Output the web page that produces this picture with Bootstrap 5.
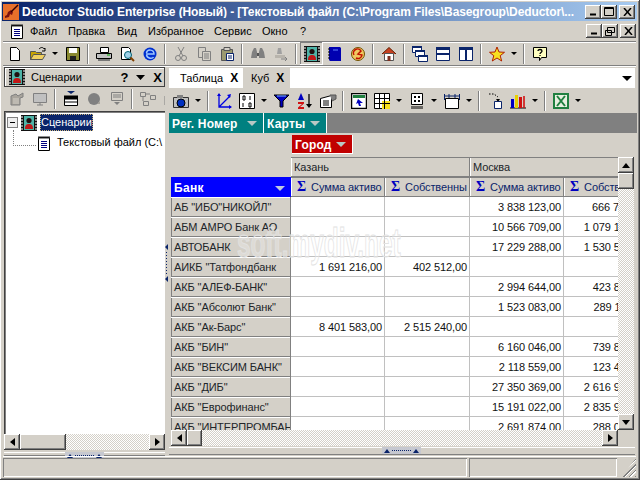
<!DOCTYPE html>
<html lang="ru">
<head>
  <meta charset="UTF-8" />
  <title>Deductor Studio Enterprise</title>
  <link href="https://cdn.jsdelivr.net/npm/bootstrap@5.3.2/dist/css/bootstrap.min.css" rel="stylesheet">
  <style>
    html, body { margin: 0; height: 100%; overflow: hidden; }
    body { background: #d4d0c8; color: #000; font: 11px/1 "Liberation Sans", Arial, sans-serif; }
    svg { display: block; flex: none; }
    .win { width: 640px; height: 480px; padding: 2px 4px 3px 3px; box-shadow: inset -1px -1px #404040, inset 1px 1px #fff, inset -2px -2px #808080; }
    .titlebar { height: 19px; flex: none; margin: 0 -1px; padding: 0 2px 0 1px; color: #fff; font-weight: 700; font-size: 12px; letter-spacing: -.1px; background: linear-gradient(90deg, #0a246a, #a6caf0); white-space: nowrap; }
    .titlebar .cap { width: 562px; padding-left: 3px; overflow: hidden; }
    .cbtn { width: 16px; height: 14px; background: #d4d0c8; box-shadow: inset -1px -1px #404040, inset 1px 1px #fff, inset -2px -2px #808080; display: flex; align-items: center; justify-content: center; }
    .cbtn.gap { margin-left: 2px; }
    .menubar { height: 21px; flex: none; border-bottom: 1px solid #808080; box-shadow: 0 1px #fff; padding-left: 6px; }
    .menubar .nav-link { padding: 0; color: #000; font-size: 11px; }
    .menubar .nav { margin-left: 5px; }
    .menubar .mi1 { width: 38px; } .menubar .mi2 { width: 49px; } .menubar .mi3 { width: 31px; }
    .menubar .mi4 { width: 66px; } .menubar .mi5 { width: 48px; } .menubar .mi6 { width: 38px; }
    .tb { height: 25px; flex: none; white-space: nowrap; overflow: hidden; }
    .tb .btn { width: 23px; height: 23px; padding: 3px; border: 0; border-radius: 0; flex: none; display: flex; align-items: center; justify-content: center; }
    .tb .btn.on { box-shadow: inset -1px -1px #fff, inset 1px 1px #808080; }
    .tb .arr { width: 12px; height: 23px; flex: none; display: flex; align-items: center; justify-content: center; }
    .tb .arr::after { content: ""; border: 3px solid transparent; border-top: 3px solid #000; border-bottom: 0; }
    .tb .sep { width: 8px; height: 20px; flex: none; }
    .tb .sep::after { content: ""; display: block; width: 2px; height: 20px; margin-left: 3px; background: #fff; box-shadow: inset 1px 0 #808080; }
    .main-tb { border-bottom: 1px solid #808080; height: 24px; box-shadow: 0 1px #fff; margin-bottom: 2px; }
    .work { height: 387px; flex: none; }
    .left { width: 162px; padding-left: 1px; margin-top: -1px; }
    .split { width: 4px; position: relative; }
    .grip-v { position: absolute; left: 0; top: 176px; }
    .pane-cap { height: 20px; flex: none; padding: 0 3px 0 5px; font-size: 11px; box-shadow: inset 1px 1px #404040, inset -1px -1px #404040, inset 2px 2px #fff; }
    .pane-cap > span { margin-left: 2px; }
    .pane-cap b { font-size: 13px; }
    .left .tb { height: 24px; padding-left: 1px; }
    .tree { height: 323px; flex: none; background: #fff; box-shadow: inset 1px 1px #404040, inset 2px 2px #808080; padding: 3px 0 0 3px; overflow: hidden; white-space: nowrap; font-size: 11px; }
    .tree .row1, .tree .row2 { height: 17px; }
    .tree .plus { width: 11px; height: 11px; border: 1px solid #808080; display: flex; align-items: center; justify-content: center; margin-right: 3px; background: #eee; flex: none; }
    .tree .plus::after { content: ""; width: 5px; height: 1px; background: #000; }
    .tree .sel { background: #0a246a; color: #fff; outline: 1px dotted #c9b27a; outline-offset: -1px; padding: 3px 1px; margin-left: 3px; }
    .tree .row2 { margin-top: 3px; }
    .tree .elbow { width: 23px; height: 16px; margin: -10px 0 0 6px; border-left: 1px dotted #808080; border-bottom: 1px dotted #808080; flex: none; }
    .tree .doc { margin: 0 5px 0 0; }
    .hs { height: 16px; flex: none; background: conic-gradient(#fff 25%, #d4d0c8 0 50%, #fff 0 75%, #d4d0c8 0) 0 0 / 2px 2px; }
    .bev { background: #d4d0c8; box-shadow: inset -1px -1px #404040, inset 1px 1px #fff, inset -2px -2px #808080; flex: none; display: flex; align-items: center; justify-content: center; }
    .sb16 { width: 16px; height: 16px; }
    .hs .thumb-l { width: 46px; height: 16px; }
    .hs .thumb-r { width: 15px; height: 16px; }
    .foot-grip { flex: none; position: relative; border-top: 1px solid #fff; border-bottom: 1px solid #808080; }
    .left .foot-grip { height: 4px; margin-top: 2px; }
    .right .foot-grip { height: 8px; margin-top: 1px; }
    .grip-h { position: absolute; height: 7px; top: -1px; background: #c6c8d0; display: flex; align-items: center; justify-content: space-between; padding: 0 2px; }
    .grip-h i { width: 0; height: 0; border: 3px solid transparent; border-bottom: 4px solid #0a246a; border-top: 0; }
    .grip-h span { flex: 1; border-top: 1px dotted #0a246a; margin: 0 2px; }
    .right { width: 466px; }
    .tabs { height: 20px; flex: none; background: #fff; padding-left: 0; border: 0; }
    .tabs .nav-link { height: 20px; padding: 0 4px 0 11px; border: 0; border-radius: 0; color: #000; font-size: 11px; display: flex; align-items: center; gap: 7px; margin: 0; }
    .tabs .nav-link.active { width: 74px; background: #fff; }
    .tabs .nav-link.idle { width: 47px; background: #d4d0c8; padding-left: 8px; }
    .tabs .x { font-weight: 700; font-size: 12px; }
    .tabs .down { margin: 0 3px 0 auto; width: 0; height: 0; border: 5px solid transparent; border-top: 5px solid #000; border-bottom: 0; }
    .right .tb { height: 25px; }
    .fieldbar { height: 20px; flex: none; background: #808080; margin-right: -2px; margin-bottom: 1px; }
    .fbtn { height: 20px; color: #fff; font-weight: 700; font-size: 12px; letter-spacing: .2px; display: flex; align-items: center; justify-content: space-between; padding: 1px 6px 0 3px; border-right: 1px solid #fff; }
    .fbtn::after { content: ""; border: 5px solid transparent; border-top: 5px solid #b8c8c4; border-bottom: 0; }
    .teal { background: #008080; }
    .red { background: #c00000; width: 61px; height: 19px; border-right: 1px solid #fff; border-bottom: 1px solid #fff; }
    .cityrow { height: 23px; flex: none; padding: 1px 0 0 123px; }
    .gridwrap { height: 273px; flex: none; padding-left: 2px; position: relative; }
    .pivot { width: 447px; height: 273px; overflow: hidden; }
    .pivot table { table-layout: fixed; width: 478px; margin: 0; border-collapse: separate; border-spacing: 0; --bs-table-bg: transparent; font-size: 11px; letter-spacing: -.1px; }
    .pivot td, .pivot th { height: 20px; padding: 1px 3px 0; border: 0; border-right: 1px solid #c0c0c0; border-bottom: 1px solid #c0c0c0; white-space: nowrap; overflow: hidden; font-weight: 400; vertical-align: middle; box-shadow: none; }
    .pivot td { text-align: right; padding-right: 2px; background: #fff; color: #111; }
    .pivot th.rh { background: #d4d0c8; border-right: 1px solid #808080; border-bottom: 1px solid #808080; box-shadow: inset 0 1px #fff, inset 1px 0 #808080; text-align: left; }
    .pivot th.none { background: #d4d0c8; border: 0; }
    .pivot th.dim { background: #d4d0c8; border-right: 1px solid #808080; border-bottom: 1px solid #808080; box-shadow: inset 0 1px #808080, inset 1px 0 #fff; text-align: left; }
    .pivot th.dim .ms { display: flex; align-items: center; gap: 5px; padding-left: 3px; color: #0a246a; }
    .pivot th.dim .ms b { color: #0000c0; font-size: 14px; font-family: "Liberation Serif", serif; }
    .pivot th.bank { background: #0000ff; color: #fff; font-weight: 700; font-size: 12px; letter-spacing: .3px; position: relative; border: 0; }
    .pivot th.bank::after { content: ""; position: absolute; right: 6px; top: 9px; border: 5px solid transparent; border-top: 5px solid #c0c8e0; border-bottom: 0; }
    .vs { width: 16px; height: 273px; background: conic-gradient(#fff 25%, #d4d0c8 0 50%, #fff 0 75%, #d4d0c8 0) 0 0 / 2px 2px; }
    .vs .spacer { flex: 1; }
    .hsrow { padding-left: 2px; height: 16px; flex: none; }
    .hsrow .hs { width: 447px; }
    .wmark { position: absolute; left: 68px; top: 66px; color: rgba(255, 255, 255, .25); -webkit-text-stroke: 1px #e2e2e2; font: 700 40px/1 "Liberation Sans", sans-serif; transform: scaleX(.61); transform-origin: left; pointer-events: none; white-space: nowrap; }
    .status { height: 21px; flex: none; margin-top: 1px; border-top: 1px solid #fff; padding-top: 1px; position: relative; }
    .status div { height: 19px; box-shadow: inset 1px 1px #808080, inset -1px -1px #fff; }
    .s1 { width: 464px; } .s2 { width: 148px; margin-left: 2px; }
    .resize { position: absolute; right: 0; bottom: 0; width: 14px; height: 14px; box-shadow: none !important; background: repeating-linear-gradient(135deg, #d4d0c8 0 2px, #808080 2px 3px, #fff 3px 4px); clip-path: polygon(100% 0, 100% 100%, 0 100%); }
  </style>
</head>
<body>
<svg width="0" height="0" style="position:absolute">
  <defs>
    <symbol id="scn" viewBox="0 0 16 16">
      <rect width="16" height="16" fill="#111"/><rect x="3" y="1" width="10" height="14" fill="#4fb4a8"/>
      <path d="M0 2h2M0 5h2M0 8h2M0 11h2M0 14h2M14 2h2M14 5h2M14 8h2M14 11h2M14 14h2" stroke="#fff"/>
      <circle cx="8" cy="5.500" r="2.600" fill="#201010"/><path d="M4 14c0-4 1.500-5 4-5s4 1 4 5z" fill="#c01818"/>
    </symbol>
    <symbol id="note" viewBox="0 0 16 16">
      <path d="M2.500 2.500h11v13h-11z" fill="#fff" stroke="#000"/><path d="M3 1v3M5 1v3M7 1v3M9 1v3M11 1v3M13 1v3" stroke="#222"/>
      <path d="M5 6.500h6M5 8.500h6M5 10.500h6M5 12.500h6" stroke="#000080"/>
    </symbol>
    <symbol id="gr" viewBox="0 0 16 16">
      <path d="M2 5l5-2 2 2 5-3v4l-3 1v7H2z" fill="#a8a49c" stroke="#808080"/><path d="M4 8h6M4 10h6M4 12h6" stroke="#d4d0c8"/>
    </symbol>
  </defs>
</svg>

<div class="win d-flex flex-column">
  <div class="titlebar d-flex align-items-center">
    <svg width="16" height="16" viewBox="0 0 16 16"><rect width="16" height="16" fill="#e8702a"/><path d="M2 14l4-1 1-3 2 1 1-3-2-2-3 2-1 3-2 1z" fill="#7a1010"/><path d="M8 8l7-7" stroke="#300" stroke-width="1.500"/></svg>
    <div class="cap">Deductor Studio Enterprise (Новый) - [Текстовый файл (C:\Program Files\Basegroup\Deductor\...</div>
    <div class="d-flex ms-auto">
      <div class="cbtn"><svg width="8" height="8"><path d="M1 6.500h6" stroke="#000" stroke-width="2"/></svg></div>
      <div class="cbtn"><svg width="10" height="9"><path d="M.5.500h9v8h-9zM1 1.500h8" fill="none" stroke="#000"/></svg></div>
      <div class="cbtn gap"><svg width="9" height="8"><path d="M1 0l7 8M8 0L1 8" stroke="#000" stroke-width="1.500"/></svg></div>
    </div>
  </div>

  <div class="menubar d-flex align-items-center">
    <svg width="16" height="16"><use href="#note"/></svg>
    <nav class="nav flex-nowrap">
      <a class="nav-link mi1">Файл</a><a class="nav-link mi2">Правка</a><a class="nav-link mi3">Вид</a><a class="nav-link mi4">Избранное</a><a class="nav-link mi5">Сервис</a><a class="nav-link mi6">Окно</a><a class="nav-link">?</a>
    </nav>
    <div class="d-flex ms-auto">
      <div class="cbtn"><svg width="8" height="8"><path d="M1 6.500h6" stroke="#000" stroke-width="2"/></svg></div>
      <div class="cbtn"><svg width="10" height="9"><path d="M2.500.500h7v5h-7zM.5 3.500h6v5h-6z" fill="#d4d0c8" stroke="#000"/></svg></div>
      <div class="cbtn gap"><svg width="9" height="8"><path d="M1 0l7 8M8 0L1 8" stroke="#000" stroke-width="1.500"/></svg></div>
    </div>
  </div>

  <div class="tb main-tb d-flex align-items-center">
    <span class="btn"><svg width="16" height="16"><path d="M3.500 1.500h6l3 3v10h-9z" fill="#fff" stroke="#000"/></svg></span>
    <span class="btn"><svg width="18" height="16"><path d="M1.500 5.500h5l1 1h5v7h-11z" fill="#c8a400" stroke="#555"/><path d="M1.500 13.500l3-5h12l-3 5z" fill="#f0d060" stroke="#555"/><path d="M10 3c2-2 4-2 5 0l1-1v3h-3" fill="none" stroke="#000"/></svg></span>
    <span class="arr"></span>
    <span class="btn"><svg width="16" height="16"><path d="M1.500 1.500h13v13h-13z" fill="#8a8a30" stroke="#000"/><path d="M4 2h8v5H4z" fill="#fff"/><path d="M5 10h6v4H5z" fill="#222"/></svg></span>
    <span class="sep"></span>
    <span class="btn"><svg width="18" height="16"><path d="M5.500 1.500h8v5h-8z" fill="#fff" stroke="#000"/><path d="M1.500 7.500h15v5h-15z" fill="#c0c0c0" stroke="#000"/><path d="M3 13h12v2H3z" fill="#777"/><path d="M12 9h3" stroke="#0a0"/></svg></span>
    <span class="btn"><svg width="16" height="16"><path d="M2.500 1.500h7l2 2v10h-9z" fill="#fff" stroke="#000"/><circle cx="9" cy="9" r="3.500" fill="#9fd0e8" stroke="#006070"/><path d="M11.500 11.500l3.500 3.500" stroke="#804000" stroke-width="2"/></svg></span>
    <span class="btn"><svg width="16" height="16"><circle cx="8" cy="8" r="6.500" fill="#0030d0"/><path d="M4 8h8c0-5-7-5-7.500-1M4.500 9c1 4 6 4 7 2" fill="none" stroke="#9fc8ff" stroke-width="1.500"/></svg></span>
    <span class="sep"></span>
    <span class="btn"><svg width="16" height="16"><path d="M5 1l5 9M11 1L6 10" stroke="#808080"/><circle cx="5" cy="12" r="2.500" fill="none" stroke="#808080"/><circle cx="11" cy="12" r="2.500" fill="none" stroke="#808080"/></svg></span>
    <span class="btn"><svg width="16" height="16"><path d="M2.500 1.500h7v10h-7z" fill="#d4d0c8" stroke="#808080"/><path d="M6.500 5.500h8v9h-8z" fill="#d4d0c8" stroke="#808080"/><path d="M8 8h5M8 10h5M8 12h5" stroke="#808080"/></svg></span>
    <span class="btn"><svg width="16" height="16"><path d="M2.500 3.500h11v11h-11z" fill="#9a9a70" stroke="#555"/><path d="M5 1.500h6v3H5z" fill="#d4d0c8" stroke="#555"/><path d="M7.500 7.500h7v7h-7z" fill="#fff" stroke="#0a246a"/><path d="M9 10h4M9 12h4" stroke="#0a246a"/></svg></span>
    <span class="sep"></span>
    <span class="btn"><svg width="16" height="16"><path d="M2 6l2-4h2l1 4v6H1zM14 6l-2-4h-2L9 6v6h6z" fill="#808080"/><path d="M7 7h2v3H7z" fill="#555"/></svg></span>
    <span class="btn"><svg width="16" height="16"><path d="M5 2h3l1 6H4z" fill="#a0a0a0"/><path d="M2 9h10v3H2z" fill="#b8b4ac"/><path d="M8 13h6m-2-2l2 2-2 2" fill="none" stroke="#808080"/></svg></span>
    <span class="sep"></span>
    <span class="btn on"><svg width="16" height="16"><use href="#scn"/></svg></span>
    <span class="btn"><svg width="16" height="16"><path d="M2 1h11l1 1v13H3l-1-1z" fill="#0000b0"/><path d="M1 3h2M1 6h2M1 9h2M1 12h2" stroke="#000"/><path d="M6 4h5" stroke="#6080ff"/></svg></span>
    <span class="btn"><svg width="16" height="16"><circle cx="8" cy="8" r="6.500" fill="#f0c860" stroke="#705000"/><path d="M4 9a4 4 0 017-4l-3 3 4 1a4 4 0 01-6 3" fill="none" stroke="#c01000" stroke-width="1.500"/></svg></span>
    <span class="sep"></span>
    <span class="btn"><svg width="16" height="16"><path d="M1 8l7-6.500L15 8" fill="#c84020" stroke="#602000"/><path d="M3.500 7.500h9v7h-9z" fill="#fff" stroke="#555"/><path d="M6.500 10h3v5h-3z" fill="#803020"/></svg></span>
    <span class="sep"></span>
    <span class="btn"><svg width="16" height="16"><path d="M.5.500h9v6h-9z" fill="#fff" stroke="#0a246a"/><path d="M3.500 4.500h9v6h-9z" fill="#fff" stroke="#0a246a"/><path d="M6.500 9.500h9v6h-9z" fill="#fff" stroke="#0a246a"/><path d="M0 0h10v2H0zM3 4h10v2H3zM6 9h10v2H6z" fill="#0a246a"/></svg></span>
    <span class="btn"><svg width="14" height="14"><path d="M.5.500h13v13H.5z" fill="#fff" stroke="#0a246a"/><path d="M0 0h14v3H0zM0 6h14v2H0z" fill="#0a246a"/></svg></span>
    <span class="btn"><svg width="14" height="14"><path d="M.5.500h13v13H.5z" fill="#fff" stroke="#0a246a"/><path d="M0 0h14v3H0zM6 0h2v14H6z" fill="#0a246a"/></svg></span>
    <span class="sep"></span>
    <span class="btn"><svg width="16" height="16"><path d="M8 1l2 5 5.500.3-4.300 3.400 1.500 5.300L8 12l-4.700 3 1.500-5.300L.5 6.300 6 6z" fill="#f8e020" stroke="#b02000"/></svg></span>
    <span class="arr"></span>
    <span class="sep"></span>
    <span class="btn"><svg width="16" height="16"><path d="M1.500 1.500h13v10h-5l-2 3v-3h-6z" fill="#ffffc0" stroke="#000"/><path d="M6 5c0-2 4-2 4 0 0 1.500-2 1.500-2 3M8 9v1" fill="none" stroke="#000" stroke-width="1.300"/></svg></span>
  </div>

  <div class="work d-flex">
    <div class="left d-flex flex-column">
      <div class="pane-cap d-flex align-items-center">
        <svg width="16" height="16" class="me-1"><use href="#scn"/></svg>
        <span>Сценарии</span>
        <b class="ms-auto">?</b>
        <svg width="9" height="5" class="mx-2"><path d="M0 0h9L4.500 5z"/></svg>
        <b>X</b>
      </div>
      <div class="tb d-flex align-items-center">
        <span class="btn"><svg width="16" height="16"><use href="#gr"/></svg></span>
        <span class="btn"><svg width="16" height="16"><path d="M1.500 2.500h13v9h-13z" fill="#c0c0c0" stroke="#808080"/><path d="M5 14h6M8 11v3" stroke="#808080"/></svg></span>
        <span class="sep"></span>
        <span class="btn"><svg width="14" height="16"><path d="M3 0h8L7 3z" fill="#0a246a"/><path d="M.5 5.500h13v9H.5z" fill="#fff" stroke="#000"/><path d="M0 5h14v3H0zM1 11h12" fill="#000" stroke="#000"/></svg></span>
        <span class="btn"><svg width="16" height="16"><circle cx="8" cy="8" r="6" fill="#808080"/><path d="M11 13l3-3v3z" fill="#a8a49c"/></svg></span>
        <span class="btn"><svg width="16" height="16"><path d="M2.500 1.500h11v8h-11z" fill="#d4d0c8" stroke="#808080"/><path d="M4 4h8M4 6h8" stroke="#808080"/><path d="M5 11h6l-3 3z" fill="#808080"/></svg></span>
        <span class="sep"></span>
        <span class="btn"><svg width="16" height="16"><path d="M.5 1.500h5v4h-5zM10.500 4.500h5v4h-5zM3.500 10.500h5v4h-5zM3 6v4M6 3h4" fill="#d4d0c8" stroke="#808080"/></svg></span>
        <span class="btn"><svg width="16" height="16"><use href="#gr"/></svg></span>
      </div>
      <div class="tree">
        <div class="row1 d-flex align-items-center">
          <span class="plus"></span>
          <svg width="16" height="16"><use href="#scn"/></svg>
          <span class="sel">Сценарии</span>
        </div>
        <div class="row2 d-flex align-items-center">
          <span class="elbow"></span>
          <svg class="doc" width="16" height="18"><use href="#note"/></svg>
          <span>Текстовый файл (C:\</span>
        </div>
      </div>
      <div class="hs d-flex">
        <span class="bev sb16"><svg width="5" height="8"><path d="M5 0v8L0 4z"/></svg></span>
        <span class="bev thumb-l"></span>
        <span class="bev sb16 ms-auto"><svg width="5" height="8"><path d="M0 0v8l5-4z"/></svg></span>
      </div>
      <div class="foot-grip"><div class="grip-h" style="left:61px;width:39px"><i></i><span></span><i></i></div></div>
    </div>

    <div class="split">
      <svg class="grip-v" width="3" height="38"><path d="M3 0v6L0 3zM3 32v6l-3-3z" fill="#0a246a"/><path d="M1.500 8v22" stroke="#0a246a" stroke-dasharray="1 2"/></svg>
    </div>

    <div class="right d-flex flex-column">
      <ul class="nav tabs flex-nowrap align-items-center">
        <li><a class="nav-link active">Таблица <span class="x">X</span></a></li>
        <li><a class="nav-link idle">Куб <span class="x">X</span></a></li>
        <li class="down"></li>
      </ul>
      <div class="tb d-flex align-items-center">
        <span class="btn"><svg width="18" height="16"><path d="M1.500 4.500h15v10h-15z" fill="#c0c0c0" stroke="#333"/><path d="M5 2h6v3H5z" fill="#808080"/><circle cx="9" cy="10" r="4" fill="#0030c0" stroke="#000"/></svg></span>
        <span class="arr"></span>
        <span class="sep"></span>
        <span class="btn"><svg width="16" height="16"><path d="M3 1v13h12M3 14L14 3" fill="none" stroke="#0000e0" stroke-width="1.300"/><path d="M1 3l2-3 2 3zM13 12l3 2-3 2zM11 2l4-1-1 4z" fill="#0000e0"/></svg></span>
        <span class="btn"><svg width="16" height="16"><path d="M.5.500h15v15H.5z" fill="#fff" stroke="#000"/><path d="M4 3h2v4H4zM11 3v4M4 10v4M10 10h2v4h-2z" fill="none" stroke="#000"/></svg></span>
        <span class="arr"></span>
        <span class="btn"><svg width="16" height="14"><path d="M0 1h15L9 7v6H6V7z" fill="#0000c0" stroke="#000"/><path d="M3 2h9" stroke="#80c0ff"/></svg></span>
        <span class="btn"><svg width="16" height="16"><path d="M1 9h6v1.500L3 14h4v2H1v-1.500L5 11H1z" fill="#d01010"/><path d="M4 0L1 7h6z" fill="#0000c0"/><path d="M12 1v12" stroke="#000" stroke-width="1.300"/><path d="M9 11h6l-3 4z"/></svg></span>
        <span class="btn"><svg width="18" height="16"><path d="M1.500 5.500l11-3v12h-11z" fill="#fff" stroke="#000"/><path d="M4 8h6M4 10h6M4 12h6" stroke="#000"/><path d="M11 2h6v4l-4 2" fill="#808080" stroke="#555"/></svg></span>
        <span class="sep"></span>
        <span class="btn"><svg width="16" height="16"><path d="M.5.500h15v15H.5z" fill="#fff" stroke="#000" stroke-width="1.500"/><path d="M2 2h12v3H2z" fill="#208040"/><path d="M7 6l5 4-3 0 1 3-2 0-1-3-2 1z" fill="#0000c0"/></svg></span>
        <span class="btn"><svg width="16" height="16"><path d="M.5.500h15v15H.5z" fill="#fff" stroke="#000"/><path d="M8 8h8v8H8z" fill="#f8e020"/><path d="M0 5.500h16M0 10.500h16M5.500 0v16M10.500 0v16" stroke="#000"/></svg></span>
        <span class="arr"></span>
        <span class="btn"><svg width="12" height="16"><path d="M.5.500h11v11H.5z" fill="#fff" stroke="#000"/><path d="M3 3h2v2H3zM7 3h2v2H7zM3 7h2v2H3zM7 7h2v2H7z"/><path d="M1 13v3M3 13v3M5 13v3M7 13v3M9 13v3M11 13v3" stroke="#000"/></svg></span>
        <span class="arr"></span>
        <span class="btn"><svg width="16" height="16"><path d="M.5 1v6M15.500 1v6M0 3h16M5 1v4M11 1v4" stroke="#0a246a"/><path d="M1.500 5.500h13v10h-13z" fill="#fff" stroke="#000"/></svg></span>
        <span class="arr"></span>
        <span class="sep"></span>
        <span class="btn"><svg width="16" height="16"><path d="M2 1h5l4 3" fill="none" stroke="#000" stroke-dasharray="1.500 1.500"/><path d="M9 6l4 0-2 3z" fill="#000"/><path d="M7.500 8.500h7v7h-7z" fill="#fff" stroke="#0a246a"/></svg></span>
        <span class="btn"><svg width="16" height="16"><path d="M0 15h16" stroke="#000"/><path d="M1 6h3v9H1z" fill="#0000c0"/><path d="M5 2h3v13H5z" fill="#e8d000"/><path d="M9 4h3v11H9z" fill="#d01010"/><path d="M13 3h2v12h-2z" fill="#d01010" opacity=".8"/></svg></span>
        <span class="arr"></span>
        <span class="sep"></span>
        <span class="btn"><svg width="16" height="16"><path d="M0 0h16v16H0z" fill="#208040"/><path d="M2 2h12v12H2z" fill="#e8f0e0"/><path d="M4 3l8 10M12 3L4 13" stroke="#208040" stroke-width="2"/></svg></span>
        <span class="arr"></span>
      </div>

      <div class="fieldbar d-flex">
        <div class="fbtn teal" style="width:95px">Рег. Номер</div>
        <div class="fbtn teal" style="width:63px">Карты</div>
      </div>
      <div class="cityrow d-flex"><div class="fbtn red">Город</div></div>

      <div class="gridwrap d-flex">
        <div class="pivot">
          <table class="table">
            <colgroup><col style="width:120px"><col style="width:94px"><col style="width:85px"><col style="width:94px"><col style="width:85px"></colgroup>
            <thead>
              <tr><th class="none"></th><th class="dim" colspan="2">Казань</th><th class="dim" colspan="2">Москва</th></tr>
              <tr>
                <th class="bank">Банк</th>
                <th class="dim"><span class="ms"><b>Σ</b>Сумма активо</span></th>
                <th class="dim"><span class="ms"><b>Σ</b>Собственны</span></th>
                <th class="dim"><span class="ms"><b>Σ</b>Сумма активо</span></th>
                <th class="dim"><span class="ms"><b>Σ</b>Собственны</span></th>
              </tr>
            </thead>
            <tbody>
              <tr><th class="rh">АБ "ИБО"НИКОЙЛ"</th><td></td><td></td><td>3 838 123,00</td><td>666 789,00</td></tr>
              <tr><th class="rh">АБМ АМРО Банк АО</th><td></td><td></td><td>10 566 709,00</td><td>1 079 119,00</td></tr>
              <tr><th class="rh">АВТОБАНК</th><td></td><td></td><td>17 229 288,00</td><td>1 530 511,00</td></tr>
              <tr><th class="rh">АИКБ "Татфондбанк</th><td>1 691 216,00</td><td>402 512,00</td><td></td><td></td></tr>
              <tr><th class="rh">АКБ "АЛЕФ-БАНК"</th><td></td><td></td><td>2 994 644,00</td><td>423 811,00</td></tr>
              <tr><th class="rh">АКБ "Абсолют Банк"</th><td></td><td></td><td>1 523 083,00</td><td>289 111,00</td></tr>
              <tr><th class="rh">АКБ "Ак-Барс"</th><td>8 401 583,00</td><td>2 515 240,00</td><td></td><td></td></tr>
              <tr><th class="rh">АКБ "БИН"</th><td></td><td></td><td>6 160 046,00</td><td>739 811,00</td></tr>
              <tr><th class="rh">АКБ "ВЕКСИМ БАНК"</th><td></td><td></td><td>2 118 559,00</td><td>123 411,00</td></tr>
              <tr><th class="rh">АКБ "ДИБ"</th><td></td><td></td><td>27 350 369,00</td><td>2 616 911,00</td></tr>
              <tr><th class="rh">АКБ "Еврофинанс"</th><td></td><td></td><td>15 191 022,00</td><td>2 835 911,00</td></tr>
              <tr><th class="rh">АКБ "ИНТЕРПРОМБАНК</th><td></td><td></td><td>2 691 874,00</td><td>288 011,00</td></tr>
            </tbody>
          </table>
        </div>
        <div class="vs d-flex flex-column">
          <span class="bev sb16"><svg width="8" height="5"><path d="M0 5h8L4 0z"/></svg></span>
          <span class="bev sb16"></span>
          <span class="spacer"></span>
          <span class="bev sb16"><svg width="8" height="5"><path d="M0 0h8L4 5z"/></svg></span>
        </div>
        <div class="wmark">soft.mydiv.net</div>
      </div>
      <div class="hsrow d-flex">
        <div class="hs d-flex">
          <span class="bev sb16"><svg width="5" height="8"><path d="M5 0v8L0 4z"/></svg></span>
          <span class="bev thumb-r"></span>
          <span class="bev sb16 ms-auto"><svg width="5" height="8"><path d="M0 0v8l5-4z"/></svg></span>
        </div>
      </div>
      <div class="foot-grip"><div class="grip-h" style="left:213px;width:39px"><i></i><span></span><i></i></div></div>
    </div>
  </div>

  <div class="status d-flex">
    <div class="s1"></div>
    <div class="s2"></div>
    <div class="resize"></div>
  </div>
</div>
</body>
</html>
